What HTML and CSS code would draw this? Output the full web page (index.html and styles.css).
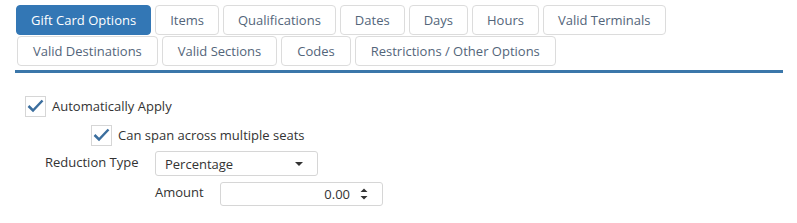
FILE: index.html
```html
<!DOCTYPE html>
<html>
<head>
<meta charset="utf-8">
<link rel="stylesheet" href="styles.css">
</head>
<body>
<div class="panel">
  <ul class="tabs">
    <li class="tab active">Gift Card Options</li>
    <li class="tab">Items</li>
    <li class="tab">Qualifications</li>
    <li class="tab">Dates</li>
    <li class="tab">Days</li>
    <li class="tab">Hours</li>
    <li class="tab">Valid Terminals</li>
    <li class="tab">Valid Destinations</li>
    <li class="tab">Valid Sections</li>
    <li class="tab">Codes</li>
    <li class="tab">Restrictions / Other Options</li>
  </ul>
  <div class="rule"></div>
  <div class="content">
    <label class="check lvl1">
      <span class="box"><svg viewBox="0 0 21 21" width="21" height="21"><path d="M3.5 10 L8 14.5 L17.5 4.5" fill="none" stroke="#3b6e9e" stroke-width="2.5"/></svg></span>
      <span class="check-label">Automatically Apply</span>
    </label>
    <label class="check lvl2">
      <span class="box"><svg viewBox="0 0 21 21" width="21" height="21"><path d="M3.5 10 L8 14.5 L17.5 4.5" fill="none" stroke="#3b6e9e" stroke-width="2.5"/></svg></span>
      <span class="check-label">Can span across multiple seats</span>
    </label>
    <div class="field-row type-row">
      <span class="field-label">Reduction Type</span>
      <div class="select">
        <span>Percentage</span>
        <svg class="caret" viewBox="0 0 8 4" width="8" height="4"><path d="M0 0 L8 0 L4 4 Z" fill="#333"/></svg>
      </div>
    </div>
    <div class="field-row amount-row">
      <span class="field-label">Amount</span>
      <div class="number">
        <span class="num-val">0.00</span>
        <svg class="spin" viewBox="0 0 8 14" width="8" height="14"><path d="M0.5 5 L4 1.5 L7.5 5 Z M0.5 9 L7.5 9 L4 12.5 Z" fill="#333"/></svg>
      </div>
    </div>
  </div>
</div>
</body>
</html>
```
FILE: styles.css
```css
html, body {
  margin: 0;
  padding: 0;
  background: #fff;
}
body {
  font-family: "Open Sans", "Noto Sans", sans-serif;
  font-size: 13px;
  color: #333;
}
.panel {
  padding: 5px 14px 0 15px;
}
.tabs {
  list-style: none;
  margin: 0;
  padding: 0 0 0 1px;
  display: flex;
  flex-wrap: wrap;
  column-gap: 4px;
  row-gap: 1px;
}
.tab {
  height: 28px;
  line-height: 28px;
  padding: 0 14px;
  border: 1px solid #dcdcdc;
  border-radius: 4px;
  color: #53657a;
  background: #fff;
  white-space: nowrap;
}
.tab.active {
  background: #3377b5;
  border-color: #3377b5;
  color: #fff;
}
.tab:nth-child(n+8) {
  padding: 0 15px;
}
.tab:nth-child(8) {
  margin-left: 1px;
}
.rule {
  height: 3px;
  background: #3b77aa;
  margin-top: 4px;
}
.content {
  padding-top: 22px;
}
.check {
  display: flex;
  align-items: center;
  gap: 6px;
  height: 22px;
}
.lvl1 {
  margin-left: 10px;
}
.lvl2 {
  margin-left: 76px;
  margin-top: 7px;
}
.box {
  width: 21px;
  height: 21px;
  border: 1px solid #d6d6d6;
  box-sizing: border-box;
  display: flex;
  align-items: center;
  justify-content: center;
}
.box svg {
  flex: none;
}
.field-row {
  display: flex;
  align-items: flex-start;
}
.type-row {
  margin-left: 30px;
  margin-top: 5px;
}
.type-row .field-label {
  width: 110px;
  padding-top: 2px;
}
.select {
  width: 163px;
  height: 25px;
  box-sizing: border-box;
  border: 1px solid #d6d6d6;
  border-radius: 3px;
  display: flex;
  align-items: center;
  justify-content: space-between;
  padding: 0 14px 0 9px;
}
.amount-row {
  margin-left: 140px;
  margin-top: 6px;
}
.amount-row .field-label {
  width: 65px;
  padding-top: 1px;
}
.number {
  width: 163px;
  height: 24px;
  box-sizing: border-box;
  border: 1px solid #d6d6d6;
  border-radius: 3px;
  display: flex;
  align-items: center;
  justify-content: flex-end;
  gap: 10px;
  padding: 0 14px 0 9px;
}
```
